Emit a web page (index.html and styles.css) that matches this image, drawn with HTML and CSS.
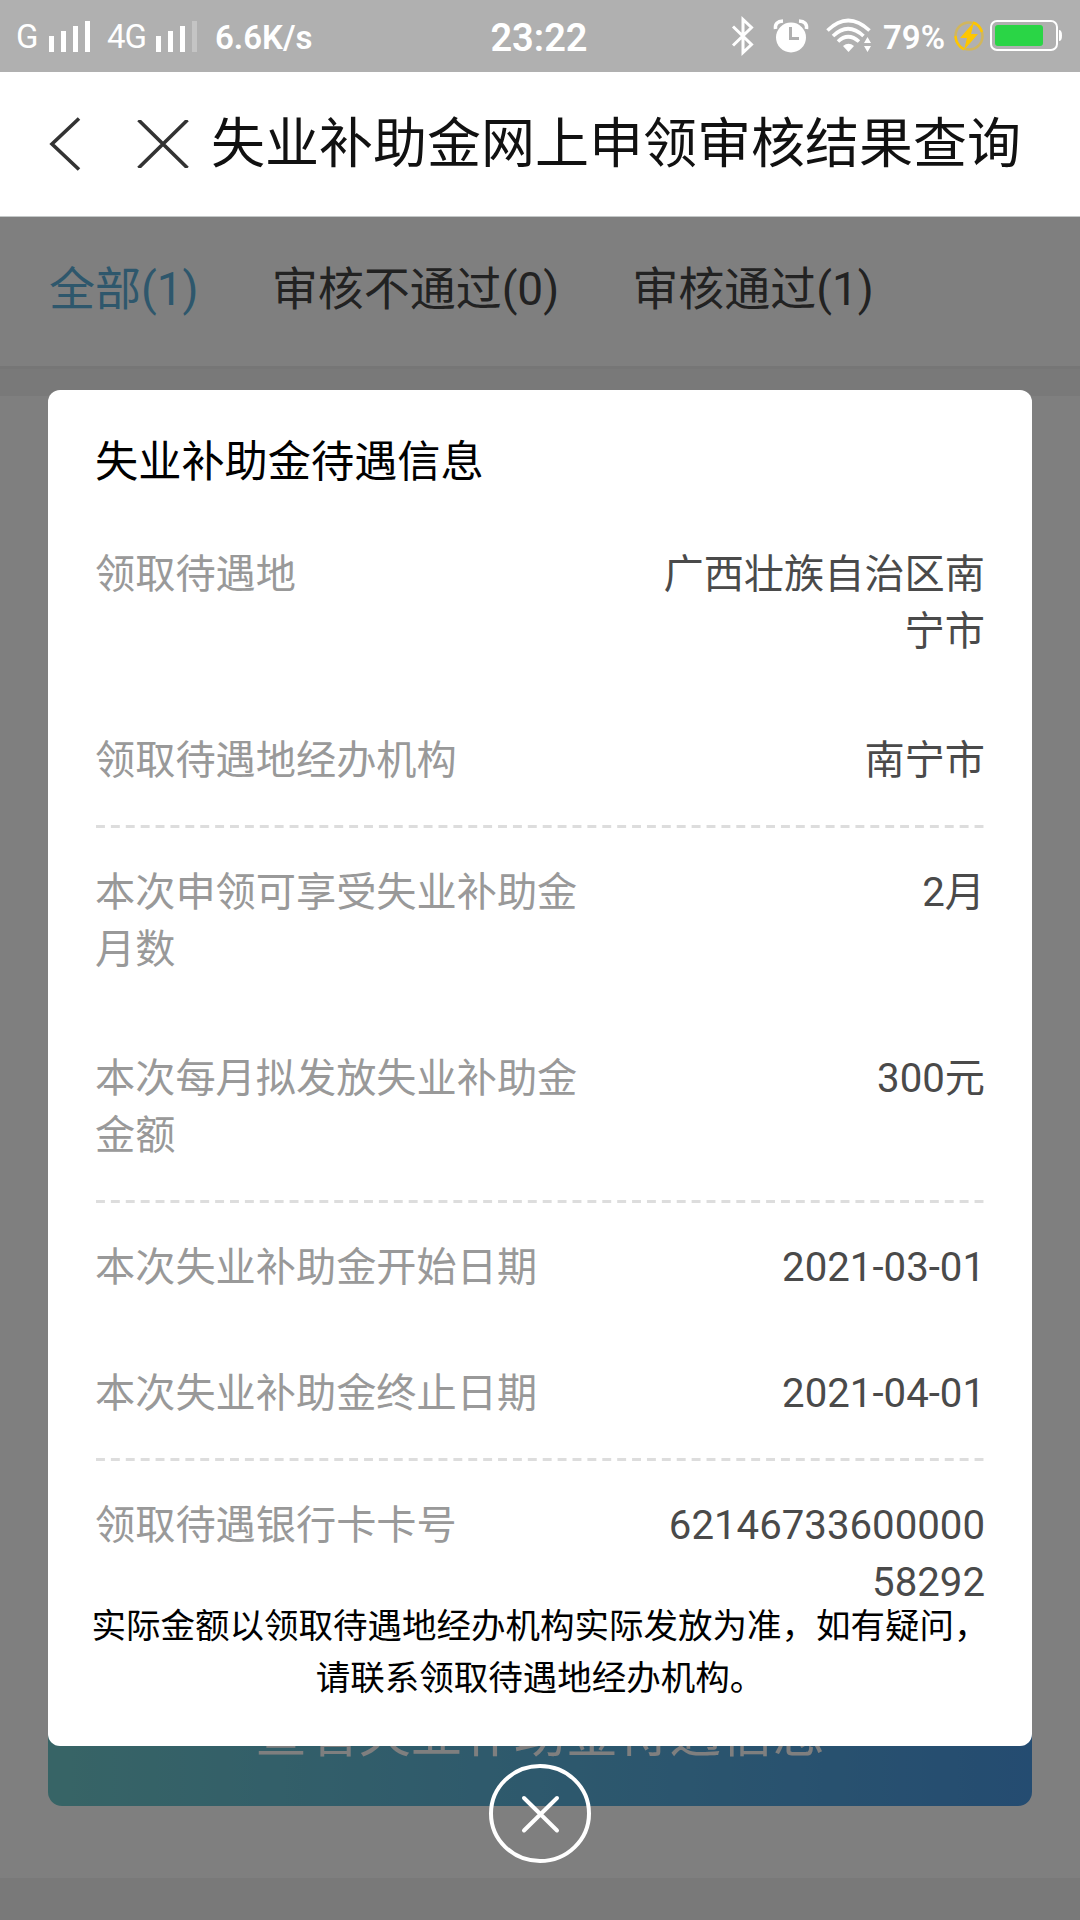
FILE: index.html
```html
<!DOCTYPE html>
<html lang="zh-CN">
<head>
    <meta charset="UTF-8">
    <meta name="viewport" content="width=device-width, initial-scale=1.0">
    <title>失业补助金网上申领审核结果查询</title>
    <link rel="stylesheet" href="styles.css">
</head>
<body>
    <div class="status-bar">
        <div class="status-left">
            <span class="net">G</span>
            <svg class="signal" width="42" height="31" viewBox="0 0 42 31" fill="#fff">
                <rect x="0" y="15" width="5" height="16"/>
                <rect x="12" y="10" width="5" height="21"/>
                <rect x="24" y="5" width="5" height="26"/>
                <rect x="36" y="0" width="5" height="31"/>
            </svg>
            <span class="net net-4g">4G</span>
            <svg class="signal" width="42" height="31" viewBox="0 0 42 31" fill="#fff">
                <rect x="0" y="15" width="5" height="16"/>
                <rect x="12" y="10" width="5" height="21"/>
                <rect x="24" y="5" width="5" height="26"/>
                <rect x="36" y="0" width="5" height="31" opacity="0.25"/>
            </svg>
            <span class="speed">6.6K/s</span>
        </div>
        <div class="clock">23:22</div>
        <div class="status-right">
            <svg class="bluetooth" width="24" height="40" viewBox="0 0 24 40" fill="none" stroke="#fff" stroke-width="3">
                <path d="M2 10.5 L20.5 28.5 L12 36.5 V3.5 L20.5 11.5 L2 29.5"/>
            </svg>
            <svg class="alarm" width="36" height="36" viewBox="0 0 36 36">
                <circle cx="18" cy="19.5" r="15" fill="#fff"/>
                <path d="M2.5 11 Q1.5 3.500 10 3 M33.500 11 Q34.500 3.500 26 3" fill="none" stroke="#fff" stroke-width="3.5"/>
                <path d="M17.500 9 V20.500 H26" fill="none" stroke="#b0b0b0" stroke-width="3"/>
            </svg>
            <svg class="wifi" width="46" height="36" viewBox="0 0 46 36" fill="none" stroke="#fff" stroke-width="3.6">
                <path d="M1.500 12.500 Q22 -7.500 43.500 12.500"/>
                <path d="M7 18 Q22 3.500 37.500 18"/>
                <path d="M12 23.500 Q22 14 33 23.500"/>
                <path d="M17 28 Q22.500 23.500 28 28 L22.500 34 Z" fill="#fff" stroke="none"/>
                <path d="M38 25 L41.500 19 L45 25 Z M38 28 L41.500 34 L45 28 Z" fill="#fff" stroke="none"/>
            </svg>
            <span class="percent">79%</span>
            <svg class="charge" width="32" height="32" viewBox="0 0 32 32">
                <circle cx="16" cy="16" r="13.500" fill="none" stroke="#d9b848" stroke-width="2.500" opacity="0.8"/>
                <path d="M11 29.500 Q3 25 2.500 16 M20 2.500 Q26 4 29 12" fill="none" stroke="#fec601" stroke-width="2.500"/>
                <path d="M21 2 L7 18 H14 L11 30 L25 14 H18 Z" fill="#fec601"/>
            </svg>
            <svg class="battery" width="72" height="32" viewBox="0 0 72 32">
                <rect x="1" y="1" width="66" height="29" rx="6" fill="none" stroke="#fff" stroke-width="2"/>
                <rect x="5" y="5" width="48" height="21" rx="3" fill="#2ad546"/>
                <path d="M69 10 Q72 10 72 15.500 Q72 21 69 21 Z" fill="#fff"/>
            </svg>
        </div>
    </div>

    <div class="nav-bar">
        <svg class="back" width="34" height="54" viewBox="0 0 34 54" fill="none" stroke="#333" stroke-width="3.6">
            <path d="M31 1.500 L4 27 L31 52.500"/>
        </svg>
        <svg class="close" width="52" height="48" viewBox="0 0 52 48" fill="none" stroke="#333" stroke-width="3.6">
            <path d="M1.500 0 L50.500 48 M50.500 0 L1.500 48"/>
        </svg>
        <h1>失业补助金网上申领审核结果查询</h1>
    </div>

    <div class="page">
        <div class="tabs">
            <span class="tab active">全部(1)</span>
            <span class="tab">审核不通过(0)</span>
            <span class="tab">审核通过(1)</span>
        </div>
        <div class="result">
            <button type="button" class="view-btn">查看失业补助金待遇信息</button>
        </div>

        <div class="mask">
            <div class="dialog">
                <h2>失业补助金待遇信息</h2>
                <div class="info">
                    <div class="group">
                        <div class="row"><span class="label">领取待遇地</span><span class="value">广西壮族自治区南宁市</span></div>
                        <div class="row"><span class="label">领取待遇地经办机构</span><span class="value">南宁市</span></div>
                    </div>
                    <div class="group">
                        <div class="row"><span class="label">本次申领可享受失业补助金月数</span><span class="value">2月</span></div>
                        <div class="row"><span class="label">本次每月拟发放失业补助金金额</span><span class="value">300元</span></div>
                    </div>
                    <div class="group group-date">
                        <div class="row"><span class="label">本次失业补助金开始日期</span><span class="value">2021-03-01</span></div>
                        <div class="row"><span class="label">本次失业补助金终止日期</span><span class="value">2021-04-01</span></div>
                    </div>
                    <div class="group">
                        <div class="row"><span class="label">领取待遇银行卡卡号</span><span class="value">6214673360000058292</span></div>
                    </div>
                </div>
                <p class="tip">实际金额以领取待遇地经办机构实际发放为准，如有疑问，请联系领取待遇地经办机构。</p>
            </div>
            <svg class="dialog-close" width="102" height="100" viewBox="0 0 102 100" fill="none" stroke="#fff" stroke-width="4">
                <ellipse cx="51" cy="49.500" rx="49" ry="47.500"/>
                <path d="M35 34 L68 66.500 M68 34 L35 66.500" stroke-linecap="round"/>
            </svg>
        </div>
    </div>
</body>
</html>
```
FILE: styles.css
```css
* {
    box-sizing: border-box;
}
body {
    margin: 0;
    width: 1080px;
    height: 1920px;
    overflow: hidden;
    display: flex;
    flex-direction: column;
    background-color: #fff;
    font-family: Roboto, "Noto Sans CJK SC", sans-serif;
}
svg {
    display: block;
    flex: none;
}
h1, h2, p {
    margin: 0;
    font-weight: normal;
}

/* status bar */
.status-bar {
    height: 72px;
    flex: none;
    display: grid;
    grid-template-columns: 1fr auto 1fr;
    align-items: center;
    padding: 0 18px 0 16px;
    background-color: #b0b0b0;
    color: #fff;
}
.status-left, .status-right {
    display: flex;
    align-items: center;
}
.status-right {
    justify-content: flex-end;
}
.net {
    font-size: 33px;
    letter-spacing: -1px;
    width: 33px;
}
.net-4g {
    width: 49px;
    margin-left: 16px;
}
.speed {
    font-size: 33px;
    font-weight: 600;
    margin-left: 17px;
    padding-top: 2px;
}
.clock {
    font-size: 38px;
    font-weight: 600;
    padding-top: 3px;
}
.alarm {
    margin-left: 18px;
}
.wifi {
    margin-left: 17px;
}
.percent {
    font-size: 33px;
    font-weight: 600;
    margin-left: 11px;
    padding-top: 2px;
}
.charge {
    margin-left: 8px;
}
.battery {
    margin-left: 5px;
}

/* title bar */
.nav-bar {
    height: 145px;
    flex: none;
    display: flex;
    align-items: center;
    padding-left: 48px;
    border-bottom: 1px solid #c4c8c8;
}
.close {
    margin-left: 55px;
}
.nav-bar h1 {
    font-size: 54px;
    line-height: 80px;
    color: #111;
    margin-left: 22px;
    padding-top: 1px;
    white-space: nowrap;
}

/* page under the mask */
.page {
    flex: 1;
    position: relative;
    display: flex;
    flex-direction: column;
    background-color: #f3f3f3;
}
.tabs {
    height: 152px;
    display: flex;
    gap: 73px;
    align-items: center;
    padding: 0 48px 13px 49px;
    background-color: #fff;
    border-bottom: 3px solid #ececec;
}
.tab {
    font-size: 46px;
    color: #444;
}
.tab.active {
    color: #5cafd9;
}
.result {
    margin-top: 27px;
    height: 1482px;
    padding: 0 48px 72px;
    display: flex;
    align-items: flex-end;
    background-color: #fff;
}
.view-btn {
    width: 100%;
    height: 132px;
    border: none;
    border-radius: 14px;
    padding: 0 0 21px;
    background: linear-gradient(to right, #6fc9cc, #5cb2da 50%, #4998e2);
    color: #fff;
    font-family: inherit;
    font-size: 51.8px;
}

/* dialog */
.mask {
    position: absolute;
    inset: 0;
    display: flex;
    flex-direction: column;
    align-items: center;
    padding-top: 173px;
    background-color: rgba(0, 0, 0, 0.5);
}
.dialog {
    width: 984px;
    height: 1356px;
    flex: none;
    display: flex;
    flex-direction: column;
    padding: 42px 48px 0;
    border-radius: 12px;
    background-color: #fff;
}
.dialog h2 {
    font-size: 43.2px;
    line-height: 62px;
    margin-left: -1px;
    color: #000;
}
.info {
    height: 1106px;
    flex: none;
    padding-top: 16px;
    font-size: 40.2px;
    line-height: 57px;
}
.group {
    display: flex;
    flex-direction: column;
    gap: 72px;
    padding: 36px 0 39px;
    /* dashed divider */
    background: linear-gradient(to right, #ddd 9px, transparent 9px) left bottom / 14.9px 3px repeat-x;
}
.group-date {
    gap: 69px;
}
.group:last-child {
    padding-bottom: 0;
    background: none;
}
.row {
    display: flex;
    justify-content: space-between;
    align-items: flex-start;
}
.label {
    width: 486px;
    margin-left: -1px;
    color: #999;
}
.value {
    width: 324px;
    margin-right: -1px;
    text-align: right;
    word-break: break-all;
    color: #4a4a4a;
}
.tip {
    font-size: 34.5px;
    line-height: 52px;
    text-align: center;
    color: #000;
    margin: 0 -6px;
}
.dialog-close {
    margin-top: 18px;
}
```
